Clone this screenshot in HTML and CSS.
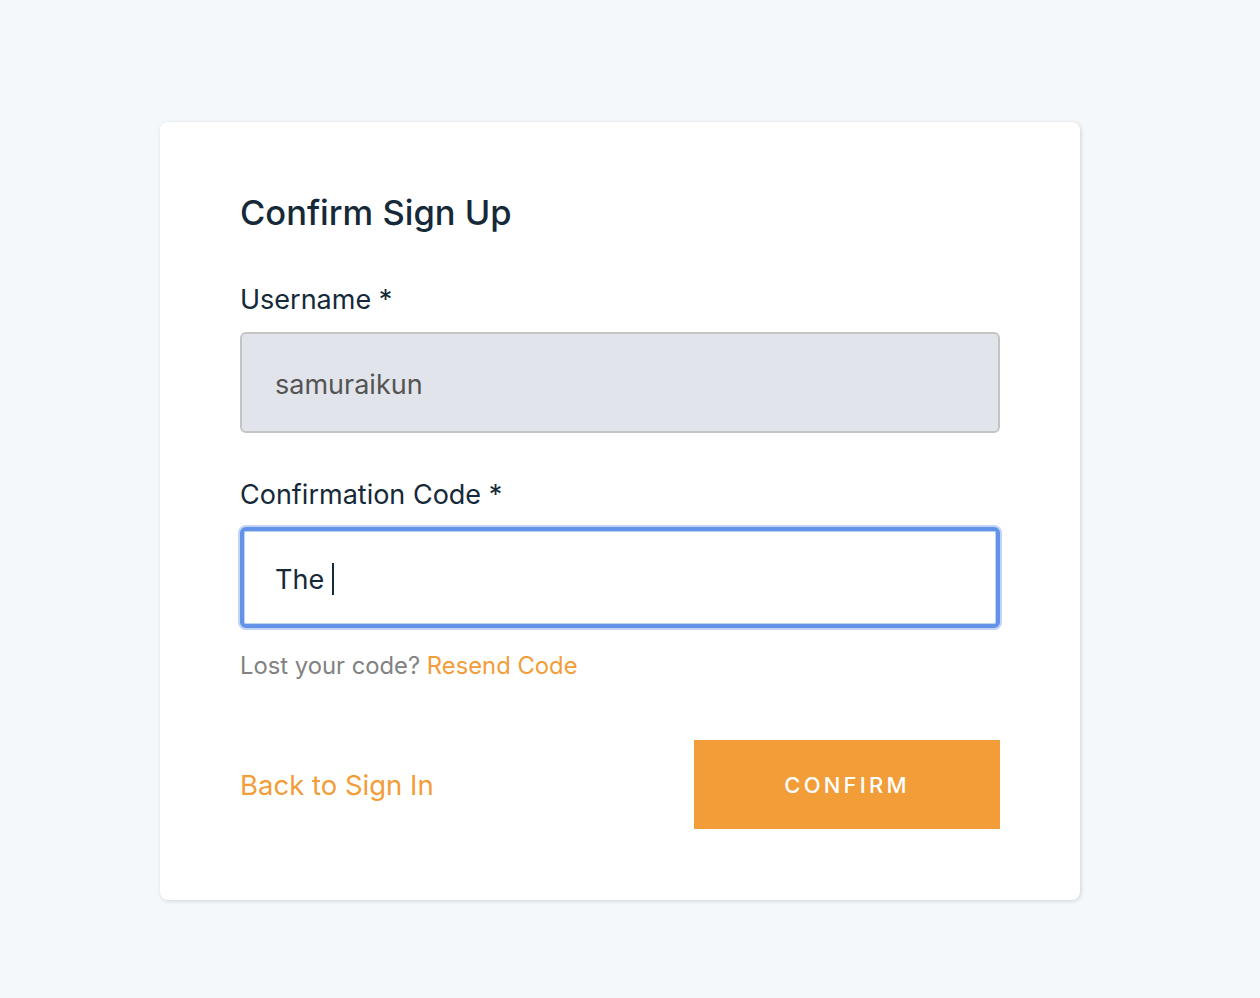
FILE: index.html
```html
<!DOCTYPE html>
<html lang="en">
<head>
<meta charset="utf-8">
<title>Confirm Sign Up</title>
<link rel="stylesheet" href="styles.css">
</head>
<body>
<main class="page">
  <section class="card">
    <h1 class="title">Confirm Sign Up</h1>
    <div class="field">
      <label class="label" for="username">Username *</label>
      <input class="input input-disabled" id="username" value="samuraikun" readonly>
    </div>
    <div class="field field-code">
      <label class="label">Confirmation Code *</label>
      <div class="input input-focused"><span class="typed">The </span><span class="caret"></span></div>
    </div>
    <p class="hint">Lost your code? <a class="link" href="#">Resend Code</a></p>
    <div class="footer">
      <a class="link back" href="#">Back to Sign In</a>
      <button class="btn" type="button">CONFIRM</button>
    </div>
  </section>
</main>
</body>
</html>
```
FILE: styles.css
```css
html, body {
  margin: 0;
  padding: 0;
}
body {
  background: #f5f8fa;
  font-family: Inter, "Noto Sans", sans-serif;
  color: #152939;
}
.page {
  display: flex;
  justify-content: flex-start;
  padding: 122px 0 0 160px;
  min-height: 998px;
  box-sizing: border-box;
}
.card {
  width: 920px;
  box-sizing: border-box;
  background: #fff;
  border-radius: 8px;
  box-shadow: 1px 1px 4px rgba(0, 0, 0, 0.15);
  padding: 70px 80px 71px;
  align-self: flex-start;
}
.title {
  margin: 0;
  font-size: 34.5px;
  line-height: 42px;
  font-weight: 500;
  color: #152939;
}
.field {
  display: flex;
  flex-direction: column;
  margin-top: 50px;
}
.field-code {
  margin-top: 46px;
}
.label {
  font-size: 27px;
  line-height: 32px;
  margin-bottom: 16px;
  color: #152939;
}
.input {
  box-sizing: border-box;
  width: 100%;
  height: 101px;
  border-radius: 6px;
  border: 2px solid #c4c4c4;
  padding: 3px 33px 0;
  font-family: Inter, "Noto Sans", sans-serif;
  font-size: 27px;
  display: flex;
  align-items: center;
  outline: none;
}
.input-disabled {
  background: #e1e4ea;
  color: #545454;
}
.input-focused {
  background: #fff;
  color: #152939;
  border: 4px solid #6393e8;
  box-shadow: 0 0 0 2px rgba(99, 147, 232, 0.4), inset 0 0 0 1px #bcd2f7;
  padding-left: 31px;
}
.typed {
  white-space: pre;
}
.caret {
  display: inline-block;
  width: 2px;
  height: 32px;
  background: #152939;
}
.hint {
  margin: 23px 0 0;
  font-size: 23.8px;
  line-height: 30px;
  color: #828282;
}
.link {
  color: #f29d38;
  text-decoration: none;
}
.footer {
  margin-top: 59px;
  display: flex;
  justify-content: space-between;
  align-items: center;
}
.back {
  font-size: 27.5px;
}
.btn {
  width: 306px;
  height: 89px;
  border: none;
  background: #f29d38;
  color: #fff;
  font-family: Inter, "Noto Sans", sans-serif;
  font-size: 22px;
  font-weight: 500;
  letter-spacing: 3.2px;
  padding: 0;
}
```
